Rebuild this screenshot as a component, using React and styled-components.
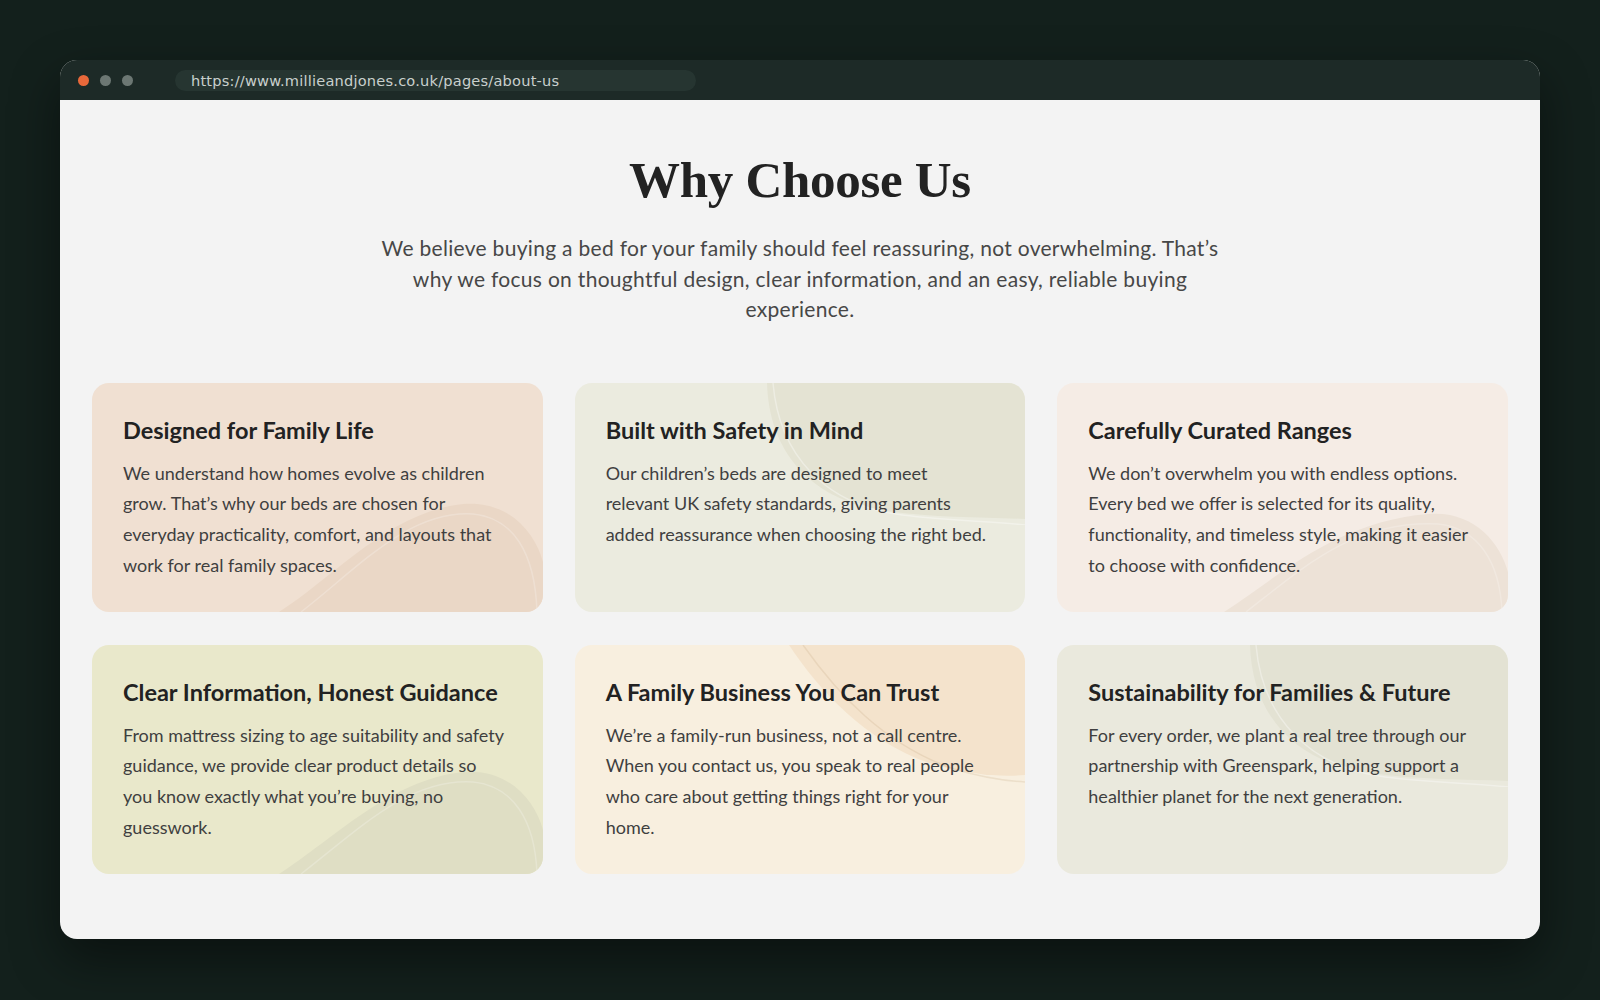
import React from "react";
import styled, { createGlobalStyle } from "styled-components";

const Global = createGlobalStyle`
  html, body {
    margin: 0;
    padding: 0;
    background: #13201c;
  }
  * { box-sizing: border-box; }
`;

const Stage = styled.div`
  width: 1600px;
  height: 1000px;
  padding: 60px 60px 0 60px;
  background: #13201c;
`;

const Window = styled.div`
  width: 1480px;
  height: 879px;
  border-radius: 17px;
  overflow: hidden;
  background: #f3f3f3;
  box-shadow: 0 20px 50px rgba(0, 0, 0, 0.45);
  display: flex;
  flex-direction: column;
`;

const TitleBar = styled.div`
  height: 40px;
  flex-shrink: 0;
  background: #1d2a27;
  display: flex;
  align-items: center;
  padding-left: 18px;
`;

const Dot = styled.span`
  width: 11px;
  height: 11px;
  border-radius: 50%;
  background: ${(p) => p.color};
  margin-right: 11px;
`;

const UrlBar = styled.div`
  margin-left: 31px;
  width: 521px;
  height: 21px;
  border-radius: 11px;
  background: #263531;
  color: #c9d0cd;
  font-family: "DejaVu Sans", sans-serif;
  font-size: 14.6px;
  line-height: 21px;
  padding-left: 16px;
  letter-spacing: 0.2px;
`;

const Content = styled.div`
  flex: 1;
  padding: 50px 32px 0;
  display: flex;
  flex-direction: column;
  align-items: center;
`;

const Heading = styled.h1`
  margin: 0;
  font-family: "Liberation Serif", "DejaVu Serif", serif;
  font-weight: 700;
  font-size: 51px;
  line-height: 60px;
  color: #222222;
  letter-spacing: -0.3px;
`;

const Intro = styled.p`
  margin: 23px 0 0;
  max-width: 850px;
  text-align: center;
  font-family: Lato, "Noto Sans", sans-serif;
  font-weight: 400;
  font-size: 21px;
  line-height: 30.6px;
  color: #474747;
  letter-spacing: 0.3px;
`;

const Grid = styled.div`
  margin-top: 58px;
  width: 100%;
  display: grid;
  grid-template-columns: repeat(3, 1fr);
  grid-auto-rows: 229px;
  gap: 33px 32px;
`;

const Card = styled.div`
  position: relative;
  overflow: hidden;
  border-radius: 17px;
  background: ${(p) => p.bg};
  padding: 32px 37px 0 31px;
`;

const Blob = styled.svg`
  position: absolute;
  pointer-events: none;
  ${(p) => (p.$top ? "top: 0;" : "bottom: 0;")}
  right: 0;
`;

const CardTitle = styled.h3`
  position: relative;
  margin: 0;
  font-family: Lato, "Noto Sans", sans-serif;
  font-weight: 700;
  font-size: 23.5px;
  line-height: 30px;
  color: #222222;
  white-space: nowrap;
`;

const CardText = styled.p`
  position: relative;
  margin: 13px 0 0;
  font-family: Lato, "Noto Sans", sans-serif;
  font-size: 18px;
  line-height: 30.6px;
  color: #3f3f3f;
`;

// soft wave rising from the bottom edge
const BottomBlob = ({ fill, w = 266, h = 110 }) => (
  <Blob width={w} height={h} viewBox={`0 0 ${w} ${h}`}>
    <path
      d={`M0 ${h} C 55 ${h - 35}, 110 10, ${w - 80} 2 C ${w - 35} -2, ${w - 8} 30, ${w} 60 L ${w} ${h} Z`}
      fill={fill}
    />
    <path
      d={`M22 ${h} C 80 ${h - 45}, 130 8, ${w - 70} 12 C ${w - 30} 16, ${w - 8} 50, ${w - 6} ${h}`}
      fill="none"
      stroke="rgba(255,255,255,0.22)"
      strokeWidth="1.5"
    />
  </Blob>
);

// large circle peeking in from the top right corner
const TopBlob = ({ fill, w = 258, h = 142 }) => (
  <Blob $top width={w} height={h} viewBox={`0 0 ${w} ${h}`}>
    <path
      d={`M0 0 C 2 70, 45 118, 120 128 C 170 135, 215 134, ${w} 136 L ${w} 0 Z`}
      fill={fill}
    />
    <path
      d={`M6 0 C 12 72, 58 122, 135 132 C 185 138, 222 138, ${w} ${h}`}
      fill="none"
      stroke="rgba(255,255,255,0.35)"
      strokeWidth="1.5"
    />
  </Blob>
);

// diagonal sweep from the top edge
const SideBlob = ({ fill }) => (
  <Blob $top width="236" height="138" viewBox="0 0 236 138">
    <path
      d="M0 0 C 30 45, 75 95, 140 118 C 180 130, 212 132, 236 130 L 236 0 Z"
      fill={fill}
    />
    <path
      d="M14 0 C 48 48, 95 100, 165 124 C 195 133, 218 136, 236 137"
      fill="none"
      stroke="rgba(190,160,120,0.2)"
      strokeWidth="1.5"
    />
  </Blob>
);

const cards = [
  {
    title: "Designed for Family Life",
    text:
      "We understand how homes evolve as children grow. That’s why our beds are chosen for everyday practicality, comfort, and layouts that work for real family spaces.",
    bg: "#f0e0d2",
    deco: <BottomBlob fill="#ead7c6" w={264} h={110} />,
  },
  {
    title: "Built with Safety in Mind",
    text:
      "Our children’s beds are designed to meet relevant UK safety standards, giving parents added reassurance when choosing the right bed.",
    bg: "#ebebdf",
    deco: <TopBlob fill="#e4e3d3" />,
  },
  {
    title: "Carefully Curated Ranges",
    text:
      "We don’t overwhelm you with endless options. Every bed we offer is selected for its quality, functionality, and timeless style, making it easier to choose with confidence.",
    bg: "#f5ece5",
    deco: <BottomBlob fill="#ede2d7" w={284} h={100} />,
  },
  {
    title: "Clear Information, Honest Guidance",
    text:
      "From mattress sizing to age suitability and safety guidance, we provide clear product details so you know exactly what you’re buying, no guesswork.",
    bg: "#e9e8cb",
    deco: <BottomBlob fill="#dfdec4" w={264} h={104} />,
  },
  {
    title: "A Family Business You Can Trust",
    text:
      "We’re a family-run business, not a call centre. When you contact us, you speak to real people who care about getting things right for your home.",
    bg: "#f8efdf",
    deco: <SideBlob fill="#f4e3cc" />,
  },
  {
    title: "Sustainability for Families & Future",
    text:
      "For every order, we plant a real tree through our partnership with Greenspark, helping support a healthier planet for the next generation.",
    bg: "#eae9dd",
    deco: <TopBlob fill="#e3e2d3" w={258} />,
  },
];

export default function App() {
  return (
    <Stage>
      <Global />
      <Window>
        <TitleBar>
          <Dot color="#e8683a" />
          <Dot color="#6c7773" />
          <Dot color="#6c7773" />
          <UrlBar>https://www.millieandjones.co.uk/pages/about-us</UrlBar>
        </TitleBar>
        <Content>
          <Heading>Why Choose Us</Heading>
          <Intro>
            We believe buying a bed for your family should feel reassuring, not
            overwhelming. That’s why we focus on thoughtful design, clear
            information, and an easy, reliable buying experience.
          </Intro>
          <Grid>
            {cards.map((c) => (
              <Card key={c.title} bg={c.bg}>
                {c.deco}
                <CardTitle>{c.title}</CardTitle>
                <CardText>{c.text}</CardText>
              </Card>
            ))}
          </Grid>
        </Content>
      </Window>
    </Stage>
  );
}
